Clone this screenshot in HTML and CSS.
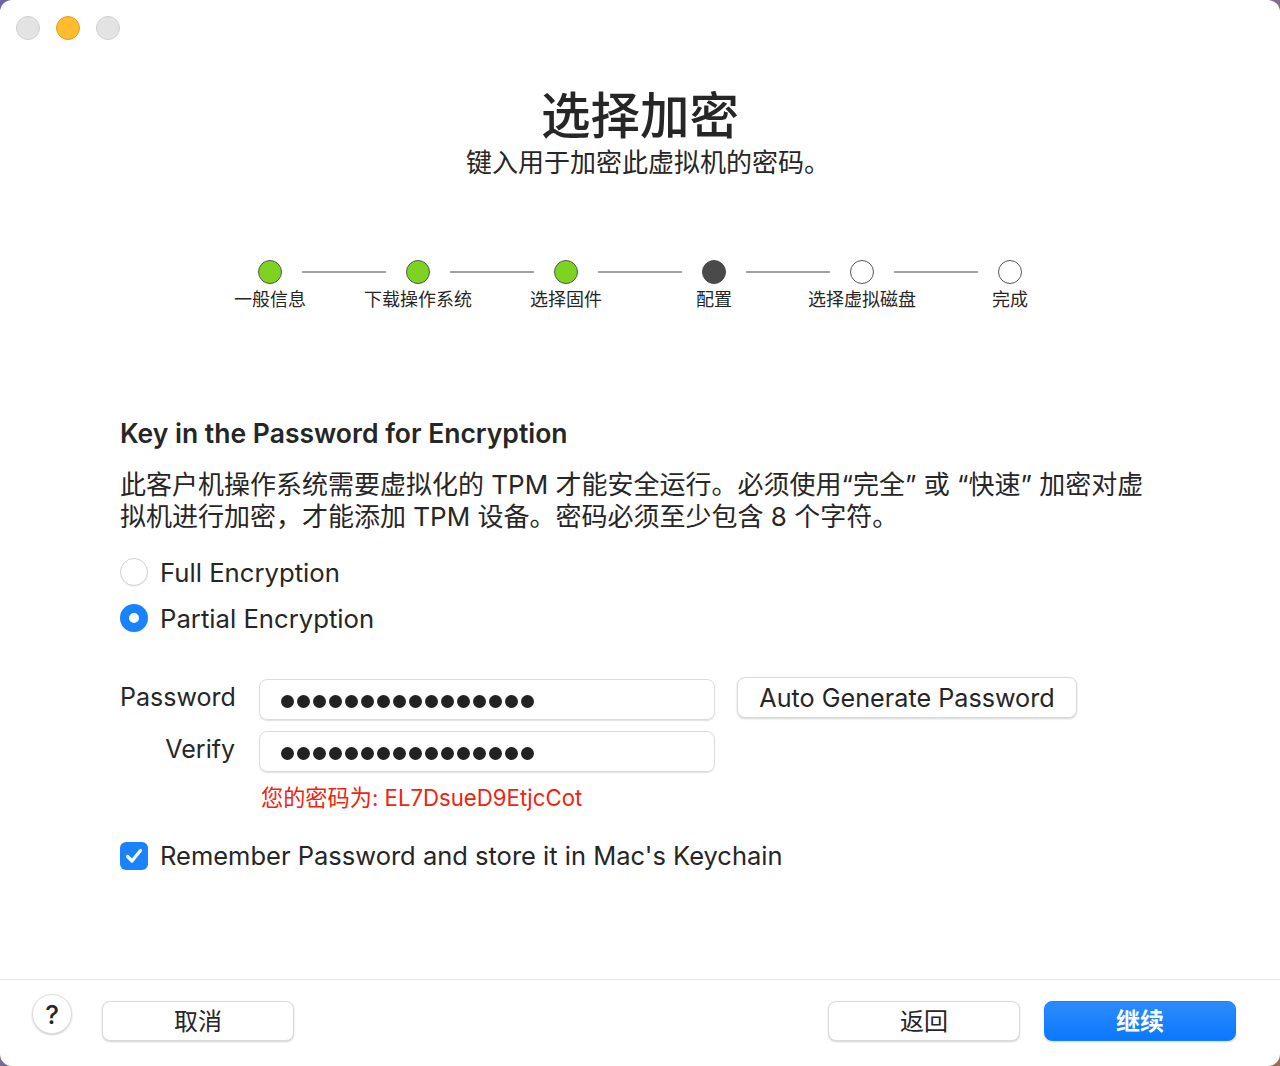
FILE: index.html
```html
<!DOCTYPE html>
<html lang="zh-CN">
<head>
  <meta charset="UTF-8">
  <title>选择加密</title>
  <link rel="stylesheet" href="styles.css">
</head>
<body>
  <div class="window">
    <div class="titlebar">
      <span class="light light-off"></span>
      <span class="light light-min"></span>
      <span class="light light-off"></span>
    </div>

    <header class="intro">
      <h1>选择加密</h1>
      <p>键入用于加密此虚拟机的密码。</p>
    </header>

    <div class="steps">
      <div class="step done"><span class="dot"></span><span class="step-label">一般信息</span></div>
      <span class="connector"></span>
      <div class="step done"><span class="dot"></span><span class="step-label">下载操作系统</span></div>
      <span class="connector"></span>
      <div class="step done"><span class="dot"></span><span class="step-label">选择固件</span></div>
      <span class="connector"></span>
      <div class="step current"><span class="dot"></span><span class="step-label">配置</span></div>
      <span class="connector"></span>
      <div class="step"><span class="dot"></span><span class="step-label">选择虚拟磁盘</span></div>
      <span class="connector"></span>
      <div class="step"><span class="dot"></span><span class="step-label">完成</span></div>
    </div>

    <main class="content">
      <h2>Key in the Password for Encryption</h2>
      <p class="desc">此客户机操作系统需要虚拟化的 TPM 才能安全运行。必须使用“完全” 或 “快速” 加密对虚拟机进行加密，才能添加 TPM 设备。密码必须至少包含 8 个字符。</p>

      <div class="radios">
        <div class="radio-row"><span class="radio"></span>Full Encryption</div>
        <div class="radio-row"><span class="radio checked"></span>Partial Encryption</div>
      </div>

      <div class="form">
        <label class="field-label">Password</label>
        <div class="field">
          <span class="pw"></span><span class="pw"></span><span class="pw"></span><span class="pw"></span>
          <span class="pw"></span><span class="pw"></span><span class="pw"></span><span class="pw"></span>
          <span class="pw"></span><span class="pw"></span><span class="pw"></span><span class="pw"></span>
          <span class="pw"></span><span class="pw"></span><span class="pw"></span><span class="pw"></span>
        </div>
        <button class="btn btn-auto" type="button">Auto Generate Password</button>

        <label class="field-label">Verify</label>
        <div class="field">
          <span class="pw"></span><span class="pw"></span><span class="pw"></span><span class="pw"></span>
          <span class="pw"></span><span class="pw"></span><span class="pw"></span><span class="pw"></span>
          <span class="pw"></span><span class="pw"></span><span class="pw"></span><span class="pw"></span>
          <span class="pw"></span><span class="pw"></span><span class="pw"></span><span class="pw"></span>
        </div>
        <span></span>

        <span></span>
        <div class="hint">您的密码为: EL7DsueD9EtjcCot</div>
        <span></span>
      </div>

      <div class="check-row">
        <span class="checkbox">
          <svg viewBox="0 0 28 28" width="28" height="28"><path d="M7.5 14.5 L12 19 L20.5 8.5" fill="none" stroke="#fff" stroke-width="3.2" stroke-linecap="round" stroke-linejoin="round"/></svg>
        </span>
        Remember Password and store it in Mac's Keychain
      </div>
    </main>

    <footer class="footer">
      <button class="help" type="button">?</button>
      <button class="btn btn-foot" type="button">取消</button>
      <span class="spacer"></span>
      <button class="btn btn-foot" type="button">返回</button>
      <button class="btn btn-foot btn-primary" type="button">继续</button>
    </footer>
  </div>
</body>
</html>
```

FILE: styles.css
```css
html {
  background: linear-gradient(135deg, #6c63a8 0%, #7d6a8c 50%, #9a6c5c 100%);
}
body {
  margin: 0;
  font-family: Inter, "Noto Sans CJK SC", sans-serif;
  color: #262626;
}
.window {
  height: 1066px;
  background: #fff;
  border-radius: 12px;
  display: flex;
  flex-direction: column;
  overflow: hidden;
}
.titlebar {
  height: 56px;
  display: flex;
  align-items: center;
  gap: 16px;
  padding-left: 16px;
}
.light {
  width: 22px;
  height: 22px;
  border-radius: 50%;
  background: #e3e3e3;
  border: 1px solid #cfcfcf;
}
.light-min {
  background: #febc2e;
  border-color: #e0a020;
}
.intro {
  margin-top: 32px;
  text-align: center;
}
.intro h1 {
  margin: 0;
  font-size: 49.5px;
  line-height: 56px;
  font-weight: 500;
}
.intro p {
  margin: 3px 0 0;
  padding-left: 16px;
  font-size: 26px;
  line-height: 32px;
}
.steps {
  margin-top: 81px;
  display: flex;
  justify-content: center;
  align-items: flex-start;
}
.step {
  width: 24px;
  display: flex;
  flex-direction: column;
  align-items: center;
}
.dot {
  width: 24px;
  height: 24px;
  box-sizing: border-box;
  border-radius: 50%;
  border: 1.3px solid #555;
  background: #fff;
}
.step.done .dot {
  background: #7ed321;
}
.step.current .dot {
  background: #4a4a4a;
  border-color: #4a4a4a;
}
.step-label {
  margin-top: 4px;
  font-size: 18px;
  line-height: 24px;
  white-space: nowrap;
}
.connector {
  width: 84px;
  height: 2px;
  margin: 11px 20px 0;
  background: #a3a3a3;
}
.content {
  padding: 0 120px;
  margin-top: 104px;
  flex: 1;
}
h2 {
  margin: 0;
  font-size: 26.5px;
  line-height: 34px;
  font-weight: 600;
}
.desc {
  margin: 19px 0 0;
  font-size: 26px;
  line-height: 32px;
  max-width: 1030px;
}
.radios {
  margin-top: 16px;
}
.radio-row {
  height: 46px;
  display: flex;
  align-items: center;
  gap: 12px;
  font-size: 25.7px;
}
.radio {
  width: 28px;
  height: 28px;
  box-sizing: border-box;
  border-radius: 50%;
  border: 1px solid #d2d2d2;
  background: #fff;
  box-shadow: 0 1px 1px rgba(0, 0, 0, 0.06);
}
.radio.checked {
  border: 9px solid #1a82fb;
}
.form {
  margin-top: 38px;
  display: grid;
  grid-template-columns: 115px 456px 340px;
  column-gap: 24px;
  row-gap: 11px;
  align-items: center;
}
.field-label {
  font-size: 25px;
  text-align: right;
  margin-top: -6px;
}
.field {
  height: 41px;
  box-sizing: border-box;
  border: 1px solid #dcdcdc;
  border-radius: 8px;
  box-shadow: 0 1px 1px rgba(0, 0, 0, 0.12);
  display: flex;
  align-items: center;
  gap: 3px;
  padding: 4px 0 0 21px;
}
.pw {
  width: 13px;
  height: 13px;
  border-radius: 50%;
  background: #222;
}
.btn {
  font-family: inherit;
  color: #262626;
  background: #fff;
  border: 1px solid #dadada;
  border-radius: 8px;
  box-shadow: 0 1px 2px rgba(0, 0, 0, 0.18);
  cursor: pointer;
}
.btn-auto {
  width: 340px;
  height: 41px;
  margin-left: -2px;
  margin-top: -4px;
  font-size: 25.2px;
  padding: 0;
}
.hint {
  color: #f0230f;
  font-size: 22.2px;
  line-height: 24px;
  margin-top: 3px;
  padding-left: 2px;
}
.check-row {
  margin-top: 30px;
  display: flex;
  align-items: center;
  gap: 12px;
  font-size: 25.5px;
}
.checkbox {
  width: 28px;
  height: 28px;
  border-radius: 6px;
  background: #1a82fb;
  display: flex;
}
.footer {
  height: 86px;
  border-top: 1px solid #e5e5e5;
  display: flex;
  align-items: flex-start;
  padding: 0 44px 0 32px;
  gap: 24px;
}
.help {
  margin-top: 14px;
  width: 40px;
  height: 40px;
  border-radius: 50%;
  border: 1px solid #dedede;
  background: #fff;
  box-shadow: 0 1px 2px rgba(0, 0, 0, 0.2);
  font-family: inherit;
  font-size: 26px;
  font-weight: 500;
  color: #262626;
  padding: 0;
  margin-right: 6px;
}
.btn-foot {
  margin-top: 21px;
  width: 192px;
  height: 40px;
  font-size: 24px;
  padding: 0 0 4px;
}
.spacer {
  flex: 1;
}
.btn-primary {
  background: linear-gradient(#2d8cfc, #0a78fe);
  border-color: #1a7ff8;
  color: #fff;
  font-weight: 600;
}
```
